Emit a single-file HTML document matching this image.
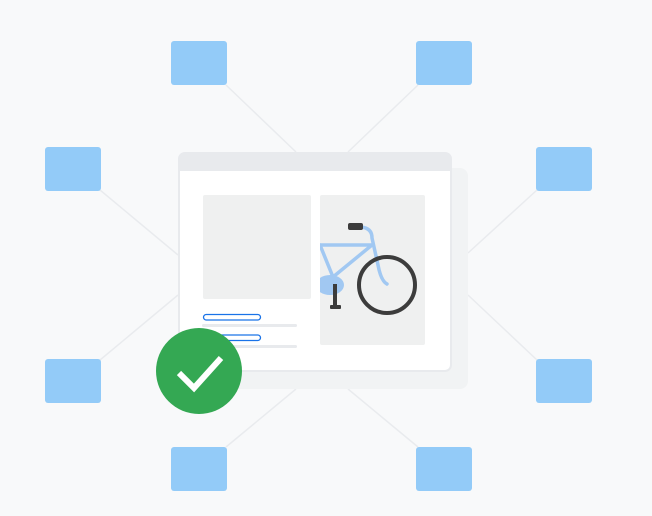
<!DOCTYPE html>
<html><head><style>
html,body{margin:0;padding:0;background:#f8f9fa;}
svg{display:block}
</style></head><body>
<svg width="652" height="516" viewBox="0 0 652 516" xmlns="http://www.w3.org/2000/svg">
<rect width="652" height="516" fill="#f8f9fa"/>
<g stroke="#e9ebee" stroke-width="1.5">
<line x1="226" y1="85" x2="296" y2="152"/>
<line x1="418" y1="85" x2="348" y2="152"/>
<line x1="100" y1="190" x2="178" y2="255"/>
<line x1="537" y1="190" x2="468" y2="253"/>
<line x1="100" y1="360" x2="178" y2="295"/>
<line x1="537" y1="360" x2="468" y2="295"/>
<line x1="226" y1="447" x2="296" y2="389"/>
<line x1="418" y1="447" x2="348" y2="389"/>
</g>
<g fill="#93cbf8">
<rect x="171" y="41" width="56" height="44" rx="3"/>
<rect x="416" y="41" width="56" height="44" rx="3"/>
<rect x="45" y="147" width="56" height="44" rx="3"/>
<rect x="536" y="147" width="56" height="44" rx="3"/>
<rect x="45" y="359" width="56" height="44" rx="3"/>
<rect x="536" y="359" width="56" height="44" rx="3"/>
<rect x="171" y="447" width="56" height="44" rx="3"/>
<rect x="416" y="447" width="56" height="44" rx="3"/>
</g>
<rect x="190" y="168" width="278" height="221" rx="8" fill="#f1f3f4"/>
<rect x="178" y="152" width="274" height="220" rx="7" fill="#e8eaed"/>
<path d="M180 171 H450 V365 a5 5 0 0 1 -5 5 H185 a5 5 0 0 1 -5 -5 Z" fill="#fff"/>
<rect x="203" y="195" width="108" height="104" rx="2" fill="#eff0f0"/>
<rect x="320" y="195" width="105" height="150" rx="2" fill="#eff0f0"/>
<rect x="203.5" y="314.5" width="57" height="5.5" rx="2.75" fill="#fff" stroke="#1a73e8" stroke-width="1.3"/>
<rect x="203.5" y="335" width="57" height="5.5" rx="2.75" fill="#fff" stroke="#1a73e8" stroke-width="1.3"/>
<rect x="202" y="324" width="95" height="3" rx="1.5" fill="#e8eaed"/>
<rect x="202" y="345" width="95" height="3" rx="1.5" fill="#e8eaed"/>
<clipPath id="c"><rect x="320" y="195" width="105" height="150"/></clipPath>
<g clip-path="url(#c)">
<g stroke="#a1c8f2" stroke-width="3.5" fill="none" stroke-linecap="round">
<path d="M361 227 Q372 228 372 238 L378 265 Q381 281 387 284"/>
<path d="M310 245 H372"/>
<path d="M320 245 L333 277 L372 245"/>
</g>
<ellipse cx="330" cy="285" rx="14" ry="10" fill="#a1c8f2"/>
<circle cx="387" cy="285" r="28" fill="none" stroke="#3c3c3c" stroke-width="4"/>
<rect x="348" y="223" width="15" height="7" rx="2" fill="#3c3c3c"/>
<rect x="333" y="284" width="4" height="23" fill="#3c3c3c"/>
<rect x="330" y="305" width="11" height="4" rx="1" fill="#3c3c3c"/>
</g>
<circle cx="199" cy="371" r="43" fill="#34a853"/>
<path d="M179 373 L194 388 L221 358" fill="none" stroke="#fff" stroke-width="6"/>
</svg>
</body></html>
